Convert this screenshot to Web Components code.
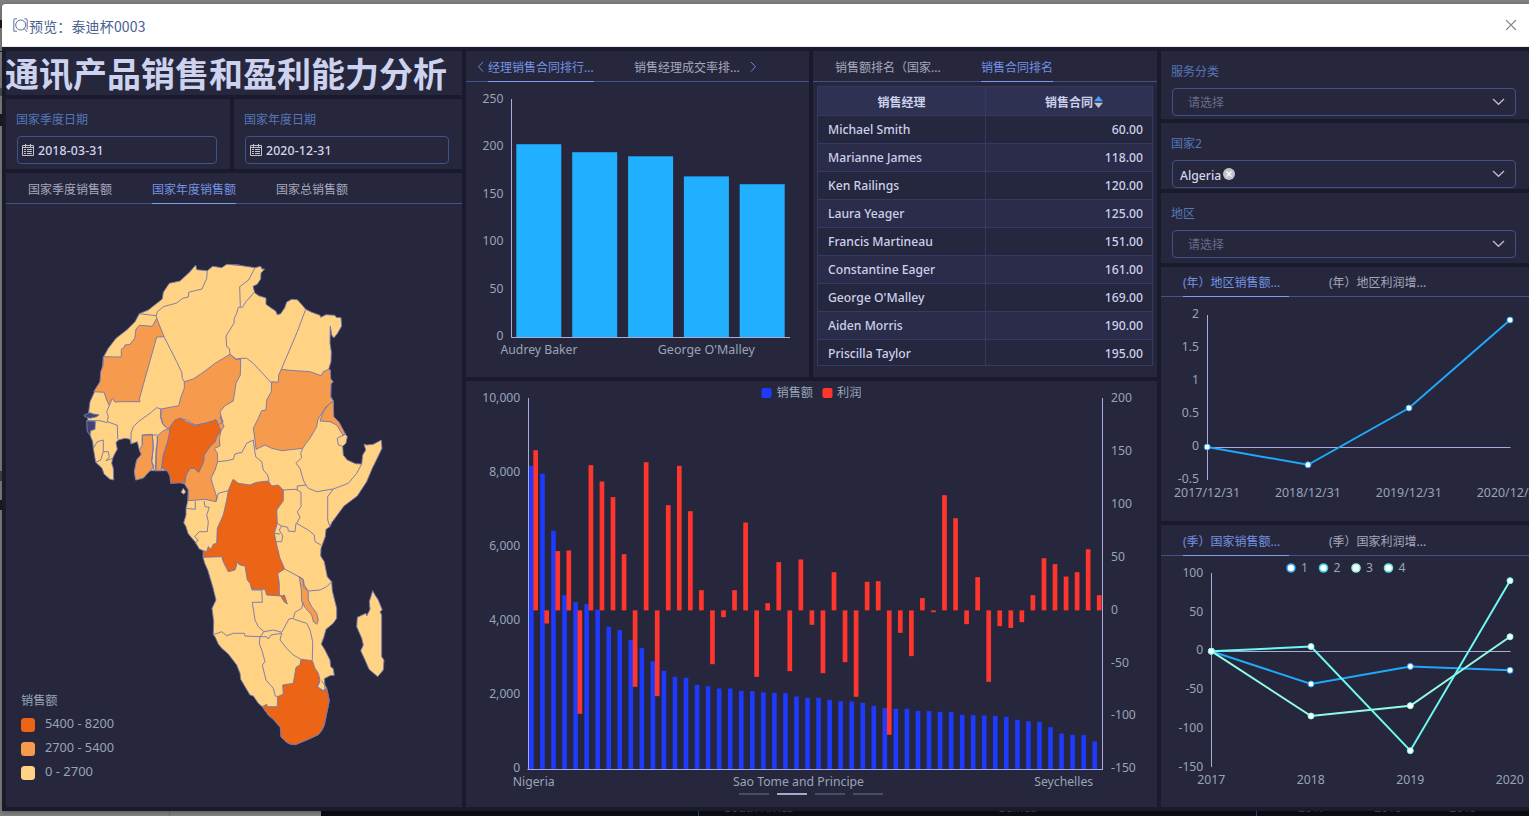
<!DOCTYPE html>
<html lang="zh-CN">
<head>
<meta charset="utf-8">
<title>预览：泰迪杯0003</title>
<style>
html,body{margin:0;height:100%;overflow:hidden;background:#808080}
body{font-family:"Noto Sans","Noto Sans CJK SC",sans-serif;font-size:12px;color:#cdd0ec}
</style>
</head>
<body>
<preview-app></preview-app>
<script>
const define=(name,css,html,init)=>customElements.define(name,class extends HTMLElement{
  connectedCallback(){
    if(this.shadowRoot)return;
    const t=document.createElement('template');
    t.innerHTML='<style>:host{display:block;box-sizing:border-box}*{box-sizing:border-box}'+css+'</style>'+(typeof html==='function'?html(this):html);
    this.attachShadow({mode:'open'}).appendChild(t.content.cloneNode(true));
    if(init)init(this);
  }
});
const AXIS='#a9acd8',LABEL='#99a4b8';
const text=(x,y,s,a='middle',w)=>`<text x="${x}" y="${y}" text-anchor="${a}"${w?` textLength="${w}" lengthAdjust="spacingAndGlyphs"`:''}>${s}</text>`;
const chartCss='svg{display:block;width:100%;height:100%}text{font:12.2px "Noto Sans","Noto Sans CJK SC",sans-serif;fill:'+LABEL+'}';

define('dash-panel',':host{background:#26273d;overflow:hidden;min-width:0;min-height:0;display:flex;flex-direction:column}','<slot></slot>');

define('dash-title',':host{font:bold 34px/44px "Noto Sans CJK SC",sans-serif;color:#cdd2ee;white-space:nowrap;height:44px;margin-left:-1px}','<slot></slot>');

define('tab-bar',`:host{flex:none;height:31px;position:relative;border-bottom:1px solid #435287;padding:0 22px}
:host([compact]){height:30px}:host([compact]) :is(nav,span){height:30px}:host([compact]) span{line-height:31px}
nav{display:flex;gap:40px;height:31px}
span{height:31px;line-height:33px;white-space:nowrap;color:#a5a8bd;flex:none}
span.wide{width:106px}
span.on{color:#7392e2;border-bottom:1px solid #7c9cf4}
svg{position:absolute;top:10px;width:7px;height:12px;fill:none;stroke:#6e8bd8}
.l{left:11px}.r{left:284px}`,
 el=>{const on=+el.getAttribute('active');
  return '<nav>'+el.getAttribute('tabs').split('|').map((t,i)=>`<span class="${i===on?'on ':''}${t.endsWith('...')?'wide':''}">${t}</span>`).join('')+'</nav>'+
  (el.hasAttribute('arrows')?'<svg class="l" viewBox="0 0 7 12"><path d="M6 1 1.5 5.7 6 10.5"/></svg><svg class="r" viewBox="0 0 7 12"><path d="M1 1 5.5 5.7 1 10.5"/></svg>':'')});

const fieldCss=`:host{padding:10px 13px 0 10px}
label{display:block;line-height:21px;height:27px;color:#5676b8}
.box{margin-left:1px;height:28px;border:1px solid #41518a;border-radius:4px;display:flex;align-items:center}`;
define('date-field',fieldCss+'.box{padding-left:4px;gap:4px;color:#d3d5ef;font-size:12.3px;font-weight:500}svg{width:12px;height:12px;flex:none}.box span{letter-spacing:.15px}',
 el=>`<label>${el.getAttribute('label')}</label><div class="box"><svg viewBox="0 0 12 12" fill="none" stroke="#c2c3ca"><path d="M.5 1.5h11v10H.5zM.5 3.5h11M3.5 0v3M8.5 0v3M2 5.5h2M5 5.5h5M2 7.5h2M5 7.5h5M2 9.5h2M5 9.5h5"/></svg><span>${el.getAttribute('value')}</span></div>`);
define('select-field',fieldCss+`.box{padding:0 10px 0 15px;color:#696b8b}.box.set{padding-left:7px;color:#d3d5ef;font-size:12.2px;font-weight:500}
.set span{padding-top:2px}
.chev{margin-left:auto;width:13px;height:8px;fill:none;stroke:#bbbdcd;stroke-width:1.3}.x{width:12px;height:12px;margin-left:2px}`,
 el=>{const v=el.getAttribute('value');
 return `<label>${el.getAttribute('label')}</label><div class="box ${v?'set':''}"><span>${v||'请选择'}</span>${v?'<svg class="x" viewBox="0 0 12 12"><circle cx="6" cy="6" r="6" fill="#c3c4cb"/><path d="M3.5 3.5l5 5m0-5-5 5" stroke="#fff" stroke-width="1.1"/></svg>':''}<svg class="chev" viewBox="0 0 13 8"><path d="M1 1l5.5 5.3L12 1"/></svg></div>`});

define('bar-chart',':host{flex:1;min-height:0}'+chartCss,()=>{
 let s='<svg viewBox="466 82 343 295">';
 [[516.3,144.2],[572.2,152.2],[628.1,156.3],[683.9,176.4],[739.7,184.2]].forEach(([x,y])=>s+=`<rect x="${x}" y="${y}" width="45" height="${337-y}" fill="#20b0ff"/>`);
 s+=`<path d="M511.5 99V337.5H790" fill="none" stroke="${AXIS}"/>`;
 [250,200,150,100,50,0].forEach((v,i)=>s+=text(503.5,103+i*47.4,v,'end'));
 return s+text(539,354,'Audrey Baker','middle',77)+text(706.3,354,"George O'Malley",'middle',97)+'</svg>';
});

define('combo-chart',':host{flex:1;min-height:0}'+chartCss,()=>{
 const sales=[8185,7970,6430,4693,4504,4450,4297,3838,3748,3478,3262,2911,2650,2488,2461,2272,2236,2173,2173,2110,2101,2065,2056,2047,1957,1921,1921,1867,1831,1822,1786,1705,1642,1624,1624,1570,1561,1543,1534,1462,1453,1444,1435,1408,1327,1291,1273,1129,958,922,913,742];
 const profit=[151.3,-12.4,56,56.6,-97.7,137.2,121.8,107,53.1,-72.2,140,-81,99.4,136.6,93.7,19.1,-50.8,-6.4,19.1,83,-62.8,6.8,45.6,-57.4,48.1,-13.6,-59.3,36.1,-48.9,-81.6,27,27.6,-117.5,-21.2,-43.2,11.6,-1.7,108.8,87.1,-13,31.4,-67.5,-14.9,-16.5,-11.1,14.4,49.3,43.7,32,36.1,57.8,14.4];
 let s='<svg viewBox="466 381 691 426">';
 sales.forEach((v,i)=>{const h=v*.03705;s+=`<rect x="${(529.1+i*11.045).toFixed(2)}" y="${769-h}" width="4.6" height="${h}" fill="#1e3aff"/>`});
 profit.forEach((v,i)=>{const h=Math.abs(v)*1.0586;s+=`<rect x="${(533.3+i*11.05).toFixed(2)}" y="${v>0?610.4-h:610.4}" width="4.7" height="${h}" fill="#ff362d"/>`});
 s+=`<path d="M528.5 398V768.9M527.5 769.5H1103M1102.5 398V769" fill="none" stroke="${AXIS}"/>`;
 ['10,000','8,000','6,000','4,000','2,000','0'].forEach((v,i)=>s+=text(520.3,402+i*74,v,'end'));
 [200,150,100,50,0,-50,-100,-150].forEach((v,i)=>s+=text(1111,402+i*52.9,v,'start'));
 s+=text(533.7,786,'Nigeria','middle',42)+text(798.5,786,'Sao Tome and Principe','middle',131)+text(1063.7,786,'Seychelles','middle',59);
 s+='<rect x="761.5" y="388" width="10" height="10" rx="2" fill="#1e3aff"/><rect x="822.5" y="388" width="10" height="10" rx="2" fill="#ff362d"/>'+text(776.5,397,'销售额','start')+text(837,397,'利润','start');
 [739,777,815,853].forEach((x,i)=>s+=`<rect x="${x}" y="793" width="30" height="2" fill="${i===1?'#a5aad2':'#494c6b'}"/>`);
 return s+'</svg>';
});

define('line-chart',':host{flex:1;min-height:0}'+chartCss,el=>{
 const yearly=el.getAttribute('kind')==='region';
 let s=`<svg viewBox="${yearly?'1161 297 368 224':'1161 556 368 251'}" preserveAspectRatio="xMinYMin">`;
 const series=(c,pts)=>{const p=pts.map(q=>q.join(',')).join(' ');
  return `<polyline points="${p}" fill="none" stroke="${c}" stroke-width="2"/>`+pts.map(q=>`<circle cx="${q[0]}" cy="${q[1]}" r="3" fill="#fff" stroke="${c}"/>`).join('')};
 if(yearly){
  s+=`<path d="M1207.5 315V480M1207 447.5H1510.5" stroke="${AXIS}"/>`;
  ['2','1.5','1','0.5','0','-0.5'].forEach((v,i)=>s+=text(1199,318.3+i*33,v,'end'));
  ['2017/12/31','2018/12/31','2019/12/31','2020/12/31'].forEach((v,i)=>s+=text(1207+i*100.9,497,v,'middle',66));
  s+=series('#20a8fb',[[1207.2,447],[1308,464.8],[1409,408],[1510,320]]);
 }else{
  s+=`<path d="M1211.5 573V767M1211 651.5H1510.5" stroke="${AXIS}"/>`;
  [100,50,0,-50,-100,-150].forEach((v,i)=>s+=text(1203.3,577+i*38.7,v,'end'));
  ['2017','2018','2019','2020'].forEach((v,i)=>s+=text(1211.3+i*99.5,784,v,'middle',28));
  s+=series('#20a8fb',[[1211.3,651.2],[1311,684],[1410.3,666.4],[1510,670.3]]);
  s+=series('#93fbe4',[[1211.3,651.2],[1311,716],[1410.3,705.7],[1510,636.8]]);
  s+=series('#6ff8f1',[[1211.3,651.2],[1311,646.6],[1410.3,750.7],[1510,580.7]]);
  ['#2eaaf5','#38cfe9','#91eed8','#62e6df'].forEach((c,i)=>s+=`<circle cx="${1291+i*32.5}" cy="568" r="4" fill="#fff" stroke="${c}" stroke-width="1.6"/>`+text(1301+i*32.5,572,i+1,'start'));
 }
 return s+'</svg>';
});

define('data-table',`:host{margin:4px 4px 0;height:280px;flex:none;overflow:hidden;border:1px solid #353963;color:#cdd0ea;font-size:12.2px;font-weight:500}
.row{display:grid;grid-template-columns:168px 1fr;height:28px;line-height:27px;border-bottom:1px solid #353963}
.row:nth-of-type(odd){background:#2a2c49}.row:nth-of-type(even){background:#25273f}
.row.head{height:29px;line-height:31px;background:#2e3152;font-weight:bold;font-size:12px}
.head span{text-align:center;padding:0!important}
span{padding:0 10px;white-space:nowrap}span:first-child{border-right:1px solid #353963}span:last-child{text-align:right;padding-right:9px}
.head span:last-child{display:flex;justify-content:center;align-items:center;gap:1px;padding-left:10px!important}svg{width:9px;height:12px;margin-top:-1px}`,
()=>{const rows=[['Michael Smith','60.00'],['Marianne James','118.00'],['Ken Railings','120.00'],['Laura Yeager','125.00'],['Francis Martineau','151.00'],['Constantine Eager','161.00'],["George O'Malley",'169.00'],['Aiden Morris','190.00'],['Priscilla Taylor','195.00']];
 return '<div class="row head"><span>销售经理</span><span>销售合同<svg viewBox="0 0 9 12"><path d="M0 5.2 4.5 0 9 5.2z" fill="#409eff"/><path d="M0 6.8h9L4.5 12z" fill="#c0c4cc"/></svg></span></div>'+rows.map(r=>`<div class="row"><span>${r[0]}</span><span>${r[1]}</span></div>`).join('')});

/* Outlines are kept as sheets at triple size; each sheet has its own origin. */
const SHEET={A:[80,255],B:[220,255],C:[80,400],D:[220,430],E:[190,570]};
const trace=str=>{let o;return str.trim().split(/\s+/).map(k=>{if(SHEET[k]){o=SHEET[k];return''}const[x,y]=k.split(',');return (o[0]+x/3).toFixed(1)+','+(o[1]+y/3).toFixed(1)}).filter(Boolean).join(' ')};
const LAND=`A 347,30 350,44 382,47 398,34 425,38 440,28 480,31 B 45,29 105,38 122,34 126,42 134,42 123,54 122,72 112,88 99,94 104,113 116,122 138,129 138,148 152,158 167,168 172,179 182,176 194,158 200,141 215,133 232,134 243,146 257,163 275,172 300,181 302,187 318,179 345,181 348,187 363,188 365,213 352,236 341,249 335,240 331,214 330,265 334,290 333,320 326,343 331,345 332,372 339,380 333,386 332,425 340,438 341,485 358,503 366,520 376,537 382,545 378,565 368,574
D 370,75 382,90 407,101 425,102 428,75 437,60 432,42 440,45 460,43 484,30 486,55 474,80 457,115 440,155 412,198 372,228 335,278 330,290 318,298 316,320 303,355 302,378 313,395 322,440 335,455 337,482 350,535
E 440,145 430,160 408,178 402,200 394,222 405,240 420,270 422,290 430,296 433,316 420,317 403,326 405,345 410,355 418,392 410,430 403,465 396,480 385,494 350,510 316,524 300,522 290,517 283,510 273,500 271,472 250,448 235,435 217,410 205,400 190,378 180,375 165,350 152,328 150,310 140,285 115,252 95,235 85,222 75,200 70,194 71,155 66,115 78,90 68,50 53,0
C 383,510 374,490 369,472 370,452 358,447 345,425 330,408 324,400 318,380 311,368 318,345 318,325 323,303 325,270 314,252 300,248 272,250 270,228 262,212 245,212 210,212 190,234 167,240 163,215 170,180 184,163 178,150 172,125 153,132 150,118 135,115 115,120 108,128 112,148 104,162 98,175 95,190 100,205 101,240 90,238 72,222 66,205 47,187 40,145 38,125 30,105 22,90 22,65 25,45 30,5
A 43,412 60,380 66,345 70,307 85,280 108,250 140,225 165,200 178,176 205,165 247,132 250,112 268,85 300,78 330,50`;
const MADAGASCAR='E 548,62 555,75 565,90 577,120 570,125 575,135 575,260 582,270 580,300 563,320 537,298 525,270 512,242 520,225 515,205 500,170 502,142 528,130 530,138 540,118 538,95';
const MID=[
'A 230,190 252,245 230,246 178,432 180,440 124,440 105,441 97,430 88,452 80,435 72,412 41,410 60,380 62,350 70,330 70,305 124,306 124,283 133,277 135,270 150,268 164,250 168,222 178,211 217,214',
'A 450,298 468,313 482,312 481,360 468,385 460,438 435,452 420,470 425,490 428,510 415,510 408,495 380,505 345,510 320,495 300,490 280,502 270,520 262,520 250,510 243,485 243,462 296,452 303,425 313,400 313,380 340,372 375,348 405,325',
'C 268,85 270,105 250,165 243,212 226,212 228,150 233,125 232,108 250,92',
'C 187,105 217,103 220,140 215,185 222,200 210,212 190,234 167,240 163,215 170,180 184,163 178,150 187,135',
'C 415,75 430,65 420,50 432,80 423,92 418,115 420,138 403,145 412,160 413,185 405,210 393,235 400,260 410,290 408,305 375,298 325,302 325,270 314,252 318,225 330,205 343,205 356,217 371,185 372,165 390,140 405,125 410,110',
'B 184,343 210,346 270,350 303,362 310,350 326,343 331,345 332,372 339,380 333,386 332,425 340,438 318,455 305,475 293,495 290,515 270,550 258,565 248,580 185,587 155,580 135,570 108,583 105,555 100,520 115,490 125,467 138,465 140,435 154,410 155,380 175,382 176,360',
'B 340,438 341,485 358,503 376,537 370,542 350,510 330,500 300,498 310,470 325,450',
'E 328,20 340,28 343,45 355,65 355,90 365,110 380,130 385,150 380,163 370,155 365,135 345,112 335,95 334,60'];
const HIGH=[
'C 270,80 285,60 300,55 320,65 345,77 375,70 400,62 408,58 415,75 423,92 410,110 405,125 390,140 372,165 371,185 356,217 343,205 330,205 318,225 314,248 300,248 272,250 270,228 262,212 245,205 250,165 262,130 268,100',
'D 40,148 55,160 90,165 110,157 145,153 155,168 175,165 190,180 190,212 170,240 172,280 163,310 170,345 180,385 194,417 173,430 178,460 178,495 185,498 193,495 202,522 192,515 182,498 140,495 135,478 95,478 90,460 82,450 75,408 60,405 48,395 50,405 45,420 25,425 10,395 C 425,470 370,472 370,452 380,455 385,440 393,448 400,433 410,430 412,385 430,345 440,300 445,272 458,240',
'E 333,268 367,272 375,295 385,310 390,330 382,350 400,362 410,355 418,392 410,430 403,465 396,480 385,494 350,510 316,524 300,522 290,517 273,500 271,472 250,448 235,435 217,410 230,403 232,410 262,410 263,380 280,372 278,345 310,340 318,292 330,285'];
const GREY=['C 12,45 30,38 40,42 57,44 50,50 30,55 14,50','C 20,62 46,64 45,88 32,92 30,105 22,95'];
const BORDERS=[
'A 382,47 380,70 366,102 350,106 326,112 325,126 308,130 290,144 250,155 232,170 229,182 230,190','A 178,176 229,182',
'A 252,245 290,320 305,352 307,370 313,380',
'A 450,298 448,280 440,275 438,243 462,205 463,190 470,175 475,157 B 67,157 78,140 103,112','B 105,38 86,75 59,95 61,155',
'C 243,27 230,23 210,40 175,65 160,80 153,100 153,132','C 243,27 241,50 247,70 262,85','C 187,135 187,105 232,105',
'C 88,17 80,35 85,50 82,65 112,76 113,118','C 20,62 60,62 82,68','C 217,107 220,140 215,185 222,212','C 232,108 228,212',
'C 40,145 52,125 70,120 70,155 62,180 47,187','C 70,155 85,155 88,170 78,182 98,175',
'C 318,325 346,328 346,303','C 372,303 375,320 388,322 380,345 385,365 382,395 358,395 344,410 355,420 345,430','C 408,305 415,280 445,272',
'C 413,185 440,182 460,178 465,162 480,158 D 65,68 80,40 100,30 103,55','B 30,298 48,313 62,310 80,310 100,325 155,385',
'D 103,55 107,80 125,95 130,120 143,135 147,153','B 257,163 232,230 184,343',
'D 248,56 242,70 245,83 228,100 240,115 250,150 258,165','D 190,180 225,178 232,180 232,168 258,165 265,175 290,185 340,177 385,160 410,130 425,102',
'D 232,180 243,187 243,230 232,245 240,262 230,280 268,302 283,315 285,335 303,345','D 172,280 185,288 203,292 205,303 225,305 228,280','D 340,177 323,200 323,270 330,290','D 185,288 178,300 188,318 185,335 170,335','D 163,310 180,312','B 376,537 352,550 355,570 368,574',
'D 194,417 240,442 250,450 250,470 265,483 300,480 320,470 335,455','E 185,60 215,60 217,97 187,97 195,150 205,170 222,185 250,180 275,187 297,147 310,145 315,127 335,115 340,97',
'E 310,147 350,160 360,180 368,215 367,270','E 70,194 95,185 110,197 130,190 163,190 165,198 210,200 230,200 235,207 243,195 275,190','E 222,185 210,200 208,220 217,245 225,275 217,285 228,330 250,355 256,378 263,380','E 275,190 270,210 290,235 310,255 333,268','E 390,335 382,350 395,362 405,360 404,345 395,332'];
define('africa-map',':host{flex:1;min-height:0}'+chartCss,()=>{
 const poly=(p,c)=>`<polygon points="${trace(p)}" fill="${c}"/>`;
 let s='<svg viewBox="6 204 456 603"><g stroke="#7476ac" stroke-width=".9" stroke-linejoin="round">';
 s+=poly(LAND,'#ffd284')+poly(MADAGASCAR,'#ffd284')+poly('C 310,265 317,275 312,283 303,277','#ffd284');
 s+=MID.map(p=>poly(p,'#f69b4e')).join('')+HIGH.map(p=>poly(p,'#ec6415')).join('')+GREY.map(p=>poly(p,'#3e4372')).join('');
 s+='<g fill="none">'+BORDERS.map(p=>`<polyline points="${trace(p)}"/>`).join('')+'</g></g>';
 s+=text(21,705,'销售额','start');
 [['#ec6415','5400 - 8200',69],['#f69b4e','2700 - 5400',69],['#ffd284','0 - 2700',48]].forEach(([c,l,w],i)=>s+=`<rect x="21" y="${718+i*24}" width="14" height="14" rx="3.5" fill="${c}"/>`+text(45,728+i*24,l,'start',w));
 return s+'</svg>';
});

define('page-behind',`:host{position:absolute;inset:0;background:#808080;overflow:hidden}
.foot{position:absolute;left:321px;right:0;bottom:0;height:26px;background:#0c0d17;color:#4b5060}
.foot span{position:absolute;top:10px;line-height:16px;transform:translateX(-50%)}
.foot i{position:absolute;top:0;bottom:0;width:1px;background:#254a79}
.split{position:absolute;left:169px;bottom:0;width:1px;height:6px;background:#707070}
.edge i{position:absolute;left:0;width:2px;background:#1b1b1b}`,
`<div class="edge"><i style="top:20px;height:8px"></i><i style="top:51px;height:1px"></i><i style="top:88px;height:8px;opacity:.5"></i><i style="top:114px;height:12px"></i><i style="top:471px;height:10px;opacity:.6"></i><i style="top:500px;height:10px"></i></div><div class="split"></div>
<div class="foot"><i style="left:377px"></i><i style="left:935px"></i><span style="left:438px;white-space:nowrap">South Africa</span><span style="left:696px">Guinea</span><span style="left:991px">2017</span><span style="left:1067px">2018</span><span style="left:1142px">2019</span></div>`);

define('preview-dialog',`:host{position:relative;display:flex;flex-direction:column;height:807px;margin:4px 0 0 2px;width:1527px;background:#191a2b;border-radius:3px 0 0 0;overflow:hidden;box-shadow:0 1px 4px rgba(0,0,0,.35)}
header{flex:none;height:43px;background:#fff;border-bottom:1px solid #e6ebf0;display:flex;align-items:center;padding:1px 12px 0 11px;font-family:"Noto Sans CJK SC",sans-serif;font-size:14px;color:#4b5f8f}
header span{letter-spacing:.15px}
.logo{width:16px;height:15px;fill:none;stroke:#4b5f8f;stroke-width:.9;margin-top:-1px}.close{margin-left:auto;width:12px;height:12px;stroke:#85898f;stroke-width:1.1;margin-top:-2px}
main{flex:1;min-height:0}`,
`<header><svg class="logo" viewBox="0 0 16 15"><path d="M4 .8H1.9Q.8.8.8 2v11.2H4M11.5.8H13Q14.2.8 14.2 2v9.5"/><circle cx="7.7" cy="7" r="5"/><path d="M11.2 10.5l3 3.5"/></svg><span>预览：泰迪杯0003</span><svg class="close" viewBox="0 0 12 12"><path d="M1 1l10 10M11 1 1 11"/></svg></header><main><slot></slot></main>`);

define('dash-board',`:host{display:grid;grid-template-columns:456px 691px 368px;gap:4px;padding:4px 0 4px 4px;height:764px}
.col{display:grid;gap:4px;min-width:0;min-height:0}
.left{grid-template-rows:44px 70px 634px}.dates{display:grid;grid-template-columns:224px 228px;gap:4px}
.mid{grid-template-rows:326px 426px}.top{display:grid;grid-template-columns:343px 344px;gap:4px}
.right{grid-template-rows:68px 66px 70px 254px 282px}`,
`<div class="col left"><dash-panel><dash-title>通讯产品销售和盈利能力分析</dash-title></dash-panel>
<div class="dates"><dash-panel><date-field label="国家季度日期" value="2018-03-31"></date-field></dash-panel><dash-panel><date-field label="国家年度日期" value="2020-12-31"></date-field></dash-panel></div>
<dash-panel><tab-bar tabs="国家季度销售额|国家年度销售额|国家总销售额" active="1"></tab-bar><africa-map></africa-map></dash-panel></div>
<div class="col mid"><div class="top"><dash-panel><tab-bar arrows tabs="经理销售合同排行...|销售经理成交率排..." active="0"></tab-bar><bar-chart></bar-chart></dash-panel>
<dash-panel><tab-bar tabs="销售额排名（国家...|销售合同排名" active="1"></tab-bar><data-table></data-table></dash-panel></div>
<dash-panel><combo-chart></combo-chart></dash-panel></div>
<div class="col right"><dash-panel><select-field label="服务分类"></select-field></dash-panel><dash-panel><select-field label="国家2" value="Algeria"></select-field></dash-panel><dash-panel><select-field label="地区"></select-field></dash-panel>
<dash-panel><tab-bar compact tabs="(年）地区销售额...|(年）地区利润增..." active="0"></tab-bar><line-chart kind="region"></line-chart></dash-panel>
<dash-panel><tab-bar tabs="(季）国家销售额...|(季）国家利润增..." active="0"></tab-bar><line-chart kind="country"></line-chart></dash-panel></div>`);

define('preview-app',':host{position:relative;height:816px;width:1529px;overflow:hidden;display:flow-root}',
'<page-behind></page-behind><preview-dialog><dash-board></dash-board></preview-dialog>');
</script>
</body>
</html>
